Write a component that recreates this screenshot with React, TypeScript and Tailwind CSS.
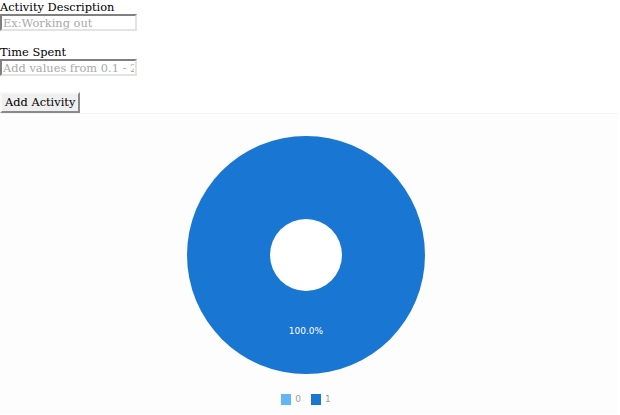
import { useState } from "react";

/* ── Slice data for the pie ───────────────────────────────────── */
const SLICES = [
  { key: "0", value: 0, color: "#64b5f6" },
  { key: "1", value: 1, color: "#1976d2" },
];

const OUTER = 119;
const INNER = 36;

function Donut() {
  const total = SLICES.reduce((s, d) => s + d.value, 0);
  const main = SLICES.find((d) => d.value > 0)!;
  const pct = ((main.value / total) * 100).toFixed(1) + "%";

  return (
    <svg width="240" height="240" viewBox="0 0 240 240">
      <circle cx="120" cy="120" r={OUTER} fill={main.color} />
      <circle cx="120" cy="120" r={INNER} fill="#ffffff" />
      <text
        x="120"
        y="199"
        textAnchor="middle"
        fill="#ffffff"
        fontSize="9"
        fontFamily="'DejaVu Sans', sans-serif"
      >
        {pct}
      </text>
    </svg>
  );
}

export default function App() {
  const [desc, setDesc] = useState("");
  const [time, setTime] = useState("");

  const inputCls =
    "block w-[137px] h-[17px] px-[1px] border-2 border-t-[#808080] border-l-[#808080] border-r-[#e3e3e3] border-b-[#e3e3e3] bg-white text-[11.4px] leading-[13px] text-black placeholder:text-[#a9a9a9] outline-none";

  return (
    <div className="w-[620px] h-[415px] bg-white font-['DejaVu_Serif',serif] text-[11.4px] text-black overflow-hidden">
      {/* Form */}
      <div className="mb-[14px]">
        <label className="block leading-[14px]">Activity Description</label>
        <input
          className={inputCls}
          placeholder="Ex:Working out"
          value={desc}
          onChange={(e) => setDesc(e.target.value)}
        />
      </div>
      <div className="mb-[16px]">
        <label className="block leading-[14px]">Time Spent</label>
        <input
          className={inputCls}
          placeholder="Add values from 0.1 - 24"
          value={time}
          onChange={(e) => setTime(e.target.value)}
        />
      </div>
      <button className="block h-[21px] px-[3px] whitespace-nowrap bg-[#efefef] border-2 border-t-[#f8f8f8] border-l-[#f8f8f8] border-r-[#8a8a8a] border-b-[#8a8a8a] text-[11.4px] leading-[15px] text-black">
        Add Activity
      </button>

      {/* Chart */}
      <div className="w-[618px] h-[301px] bg-[#fdfdfd] border-t border-[#f4f4f4] font-['DejaVu_Sans',sans-serif]">
        <div className="w-[612px] flex flex-col items-center pt-[21px]">
          <Donut />
          <div className="flex items-center gap-[10px] mt-[18px] text-[9px] text-[#9e9e9e]">
            {SLICES.map((s) => (
              <div key={s.key} className="flex items-center gap-[4px]">
                <span
                  className="block w-[10px] h-[11px]"
                  style={{ backgroundColor: s.color }}
                />
                <span>{s.key}</span>
              </div>
            ))}
          </div>
        </div>
      </div>
    </div>
  );
}
